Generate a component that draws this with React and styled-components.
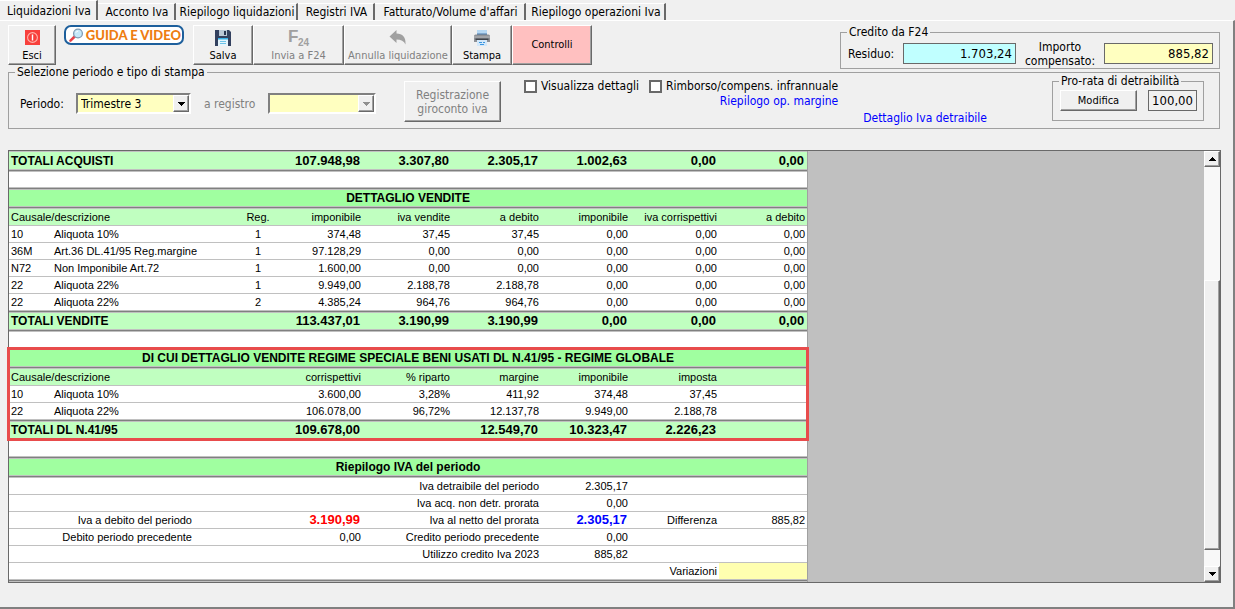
import React from "react";
import styled, { createGlobalStyle, css } from "styled-components";

const UI_FONT = `"DejaVu Sans Condensed", "DejaVu Sans", sans-serif`;
const GRID_FONT = `"Liberation Sans", Arial, sans-serif`;

const GlobalStyle = createGlobalStyle`
  * { box-sizing: border-box; }
  body { margin: 0; background: #f0f0f0; color: #000; font: 12px/14px ${UI_FONT}; }
  button, input, select { font: inherit; color: inherit; margin: 0; border-radius: 0; }
`;

const Window = styled.div`
  min-height: 100vh;
  display: flex;
  flex-direction: column;
`;

const TabBar = styled.nav`
  display: flex;
  align-items: flex-end;
  height: 20px;
`;

const Tab = styled.button`
  height: ${(p) => (p.$active ? 20 : 17)}px;
  width: ${(p) => p.$w}px;
  flex: none;
  padding: 0 0 0 2px;
  border: 0;
  border-top: 1px solid #fff;
  border-right: 2px solid #696969;
  background: #f0f0f0;
  white-space: nowrap;
`;

const Panel = styled.main`
  flex: 1;
  border-top: 1px solid #fff;
  border-right: 2px solid #808080;
  border-bottom: 2px solid #808080;
  padding: 4px 12px 24px 8px;
`;

const TopRow = styled.div`
  display: flex;
  align-items: flex-start;
  height: 40px;
`;

const raised = css`
  border: 1px solid;
  border-color: #fff #696969 #696969 #fff;
  box-shadow: inset -1px -1px #a0a0a0;
`;

const ToolButton = styled.button`
  ${raised}
  width: ${(p) => p.$w}px;
  height: 40px;
  flex: none;
  display: flex;
  flex-direction: column;
  align-items: center;
  justify-content: ${(p) => (p.$fill ? "center" : "flex-end")};
  gap: ${(p) => p.$gap ?? 3}px;
  padding: 0 0 1px;
  font-size: 11px;
  white-space: nowrap;
  background: ${(p) => p.$fill || "#f0f0f0"};
  &:disabled { color: #808080; }
`;

const GuideButton = styled.button`
  width: 120px;
  height: 20px;
  flex: none;
  margin: 0 9px 0 8px;
  padding: 0 1px 0 3px;
  display: flex;
  align-items: center;
  justify-content: space-between;
  border: 2px solid #1d5f9c;
  border-radius: 7px;
  background: #fff;
  color: #ee7d11;
  font: 900 13px/14px Lato, sans-serif;
  white-space: nowrap;
`;

const Group = styled.fieldset`
  margin: 0;
  min-width: 0;
  border: 1px solid #a0a0a0;
  padding: 0;
  display: flex;
  legend { padding: 0 2px; margin-left: -1px; line-height: 14px; }
`;

const CreditGroup = styled(Group)`
  width: 380px;
  height: 44px;
  margin-left: auto;
  margin-right: 1px;
  padding: 0 6px 0 7px;
  gap: 7px;
  align-items: center;
  justify-content: flex-end;
`;

const ResidueLabel = styled.label`
  margin-right: auto;
`;

const TwoLineLabel = styled.label`
  text-align: center;
  width: 74px;
`;

const Amount = styled.input`
  width: ${(p) => p.$w}px;
  height: 21px;
  border: 1px solid #696969;
  background: ${(p) => p.$bg || "#f0f0f0"};
  padding: 0 3px;
  font-size: 13px;
  text-align: right;
`;

const FilterGroup = styled(Group)`
  height: 64px;
  margin: 0 1px 0 0;
  padding: 0 15px 0 11px;
  align-items: flex-start;
  > legend { margin-left: -5px; }
`;

const FieldLabel = styled.label`
  width: ${(p) => p.$w}px;
  margin-top: 18px;
  flex: none;
  ${(p) => p.$muted && "padding-left: 13px; color: #808080;"}
`;

const SelectBox = styled.span`
  position: relative;
  flex: none;
  width: ${(p) => p.$w}px;
  height: 21px;
  margin-top: 14px;
  select {
    appearance: none;
    width: 100%;
    height: 100%;
    padding: 1px 20px 0 3px;
    border: 2px solid;
    border-color: #808080 #fff #fff #808080;
    background: #ffffc0;
    opacity: 1;
  }
`;

const DropArrow = styled.span`
  ${raised}
  position: absolute;
  right: 2px;
  top: 2px;
  width: 16px;
  height: 17px;
  display: grid;
  place-items: center;
  background: #f0f0f0;
  pointer-events: none;
`;

const GiroButton = styled.button`
  ${raised}
  width: 97px;
  height: 41px;
  flex: none;
  margin: 2px 23px 0 28px;
  padding: 0;
  background: #f0f0f0;
  &:disabled { color: #808080; }
`;

const Options = styled.div`
  display: flex;
  flex-direction: column;
  align-items: flex-end;
  gap: 1px;
`;

const CheckRow = styled.div`
  display: flex;
  gap: 10px;
`;

const Check = styled.label`
  display: flex;
  align-items: center;
  gap: 4px;
  white-space: nowrap;
  input {
    appearance: none;
    width: 13px;
    height: 13px;
    border: 2px solid #696969;
    background: #fff;
  }
`;

const BlueLink = styled.a`
  color: #0000ff;
  text-decoration: none;
  white-space: nowrap;
`;

const DetailLink = styled(BlueLink)`
  margin: 32px 0 0 25px;
`;

const ProRata = styled(Group)`
  width: 152px;
  height: 47px;
  margin: -5px 0 0 auto;
  padding: 2px 6px 0 7px;
  justify-content: space-between;
  align-items: flex-start;
`;

const SmallButton = styled.button`
  ${raised}
  width: 77px;
  height: 21px;
  padding: 0;
  font-size: 11px;
  background: #f0f0f0;
`;

const Sheet = styled.section`
  display: flex;
  margin: 21px 0 0;
  border: 1px solid #696969;
  background: #c0c0c0;
`;

const Report = styled.div`
  width: 799px;
  flex: none;
  background: #fff;
  border-right: 1px solid #a0a0a0;
  font-family: ${GRID_FONT};
  font-size: 11px;
`;

const Section = styled.div`
  position: relative;
  ${(p) =>
    p.$marked &&
    css`
      &::after {
        content: "";
        position: absolute;
        inset: -3px -2px 0 -2px;
        border: 3px solid #e84c4c;
        pointer-events: none;
      }
    `}
`;

const Table = styled.table`
  width: 100%;
  table-layout: fixed;
  border-collapse: separate;
  border-spacing: 0;
`;

const RULE = "inset 0 -1px #c0c0c0, inset 0 -2px #808080, inset 0 -3px #c0c0c0";
const FILL = { title: "#a0ffa0", head: "#c0ffc0", total: "#c0ffc0" };
const isBold = (kind) => kind === "title" || kind === "total";

const Row = styled.tr`
  height: ${(p) => (p.$first ? 21 : p.$rule ? 19 : 17)}px;
  td, th {
    padding: ${(p) => (p.$first ? 2 : 0)}px 2px ${(p) => (p.$rule ? 3 : 1)}px;
    line-height: 14px;
    font-weight: ${(p) => (isBold(p.$kind) ? "bold" : "normal")};
    font-size: ${(p) => (isBold(p.$kind) ? 12 : 11)}px;
    background: ${(p) => FILL[p.$kind] || "#fff"};
    box-shadow: ${(p) => (p.$rule ? RULE : "inset 0 -1px #c0c0c0")}${(p) => (p.$first ? ", inset 0 1px #c0c0c0" : "")};
    white-space: nowrap;
    text-align: left;
  }
`;

const Num = styled.td`
  && {
    text-align: right;
    font-size: ${(p) => (p.$strong ? 13 : 11)}px;
    font-weight: ${(p) => (p.$strong ? "bold" : "normal")};
    color: ${(p) => p.$color || "inherit"};
    padding-right: ${(p) => (p.$strong ? 3 : 2)}px;
    background: ${(p) => p.$bg};
  }
`;

const HeadNum = styled.th`
  && { text-align: right; }
`;

const Mid = styled.td`
  && { text-align: center; }
`;

const TitleCell = styled.th`
  && { text-align: center; }
`;

const Spacer = styled.div`
  height: 18px;
  background: #fff;
  box-shadow: ${RULE};
`;

const Void = styled.div`
  flex: 1;
`;

const ScrollBar = styled.div`
  width: 16px;
  flex: none;
  display: flex;
  flex-direction: column;
  background: #f8f8f8;
`;

const ScrollButton = styled.button`
  ${raised}
  height: 16px;
  padding: 0;
  display: grid;
  place-items: center;
  background: #f0f0f0;
`;

const Track = styled.div`
  flex: ${(p) => p.$share};
`;

const Thumb = styled.div`
  ${raised}
  flex: 270;
  background: #f0f0f0;
`;

const Triangle = ({ up, muted }) => (
  <svg width="7" height="4" viewBox="0 0 7 4" shapeRendering="crispEdges">
    <path d={up ? "M3 0h1v1h1v1h1v1h1v1H0V3h1V2h1V1h1z" : "M0 0h7v1H6v1H5v1H4v1H3V3H2V2H1V1H0z"} fill={muted ? "#909090" : "#000"} />
  </svg>
);

const ExitIcon = () => (
  <svg width="15" height="16" viewBox="0 0 15 16">
    <rect width="15" height="15" fill="#f8403c" />
    <circle cx="7.5" cy="7.5" r="4.9" fill="none" stroke="#ffb4ac" strokeWidth="1.1" />
    <path d="M7.5 4.5v6" stroke="#fff" strokeWidth="1.4" />
  </svg>
);

const GlassIcon = () => (
  <svg width="15" height="14" viewBox="0 0 15 14">
    <path d="M6 8.2 1.5 12.6" stroke="#e8424a" strokeWidth="2.6" strokeLinecap="round" />
    <circle cx="9" cy="5.5" r="4.4" fill="#c4e8fa" stroke="#7e9cb4" strokeWidth="1.3" />
    <path d="M6.8 4.8a2.6 2.6 0 0 1 2.4-1.7" stroke="#fff" fill="none" />
  </svg>
);

const SaveIcon = () => (
  <svg width="16" height="16" viewBox="0 0 16 16">
    <path d="M0 0h14l2 2v14H0z" fill="#33415f" />
    <path d="M4 0h8v6H4z" fill="#b9c7d6" />
    <path d="M9 1h2v4H9z" fill="#26344f" />
    <path d="M3 8h10v8H3z" fill="#e6f5fc" />
    <path d="M3 8h10v1.5H3z" fill="#35aee6" />
    <path d="M5 11.5h6M5 13.5h6" stroke="#6cc3e8" />
  </svg>
);

const F24Icon = () => (
  <svg width="22" height="21" viewBox="0 0 22 21" fill="#a0a0a0" fontFamily="Liberation Sans, sans-serif" fontWeight="bold">
    <text x="0" y="15" fontSize="17">F</text>
    <text x="10" y="19" fontSize="10">24</text>
  </svg>
);

const UndoIcon = () => (
  <svg width="18" height="16" viewBox="0 0 18 16">
    <path d="M7.500 0v3.500c6 0 9.500 3.500 9 11-1.500-3.500-4.500-5-9-5V13L.5 6.500z" fill="#a0a0a0" />
  </svg>
);

const PrintIcon = () => (
  <svg width="16" height="16" viewBox="0 0 16 16">
    <path d="M3 0h10v5H3z" fill="#b5d7f3" />
    <path d="M3 3.500h10v1.500H3z" fill="#4b79a8" />
    <path d="M0 6q0-1.500 1.500-1.500h13Q16 4.500 16 6v6H0z" fill="#8d9197" />
    <path d="M0 6.500h16v1H0z" fill="#b4b6ba" />
    <path d="M1.500 8.500h13V10h-13z" fill="#3f444c" />
    <path d="M3 10h10v6H3z" fill="#d3e8fa" />
    <path d="M5 12.500h3M9 12.500h2M6 14.500h4" stroke="#3b97e0" />
  </svg>
);

const TABS = [
  ["Liquidazioni Iva", 98],
  ["Acconto Iva", 78],
  ["Riepilogo liquidazioni", 122],
  ["Registri IVA", 77],
  ["Fatturato/Volume d'affari", 151],
  ["Riepilogo operazioni Iva", 140],
];

const SALES = [
  ["10", "Aliquota 10%", "1", "374,48", "37,45", "37,45", "0,00", "0,00", "0,00"],
  ["36M", "Art.36 DL.41/95 Reg.margine", "1", "97.128,29", "0,00", "0,00", "0,00", "0,00", "0,00"],
  ["N72", "Non Imponibile Art.72", "1", "1.600,00", "0,00", "0,00", "0,00", "0,00", "0,00"],
  ["22", "Aliquota 22%", "1", "9.949,00", "2.188,78", "2.188,78", "0,00", "0,00", "0,00"],
  ["22", "Aliquota 22%", "2", "4.385,24", "964,76", "964,76", "0,00", "0,00", "0,00"],
];

const MARGIN = [
  ["10", "Aliquota 10%", "", "3.600,00", "3,28%", "411,92", "374,48", "37,45", ""],
  ["22", "Aliquota 22%", "", "106.078,00", "96,72%", "12.137,78", "9.949,00", "2.188,78", ""],
];

const SUMMARY = [
  ["", "", "Iva detraibile del periodo", "2.305,17", "", ""],
  ["", "", "Iva acq. non detr. prorata", "0,00", "", ""],
  ["Iva a debito del periodo", "3.190,99", "Iva al netto del prorata", "2.305,17", "Differenza", "885,82"],
  ["Debito periodo precedente", "0,00", "Credito periodo precedente", "0,00", "", ""],
  ["", "", "Utilizzo credito Iva 2023", "885,82", "", ""],
  ["", "", "", "", "Variazioni", ""],
];

const COLUMNS = [43, 142, 46, 36, 87, 89, 89, 89, 89, 88];

const Columns = () => (
  <colgroup>
    {COLUMNS.map((w, i) => (
      <col key={i} width={w} />
    ))}
  </colgroup>
);

const TotalRow = ({ label, values, first }) => (
  <Row $kind="total" $rule $first={first}>
    <th scope="row" colSpan={4}>{label}</th>
    {values.map((v, i) => (
      <Num key={i} $strong>{v}</Num>
    ))}
  </Row>
);

const DetailTable = ({ title, reg, heads, rows, totalLabel, totals }) => (
  <Table>
    <Columns />
    <thead>
      <Row $kind="title" $rule>
        <TitleCell colSpan={10}>{title}</TitleCell>
      </Row>
      <Row $kind="head">
        <th scope="col" colSpan={3}>Causale/descrizione</th>
        <TitleCell scope="col">{reg}</TitleCell>
        {heads.map((h, i) => (
          <HeadNum key={i} scope="col">{h}</HeadNum>
        ))}
      </Row>
    </thead>
    <tbody>
      {rows.map(([code, text, register, ...nums], i) => (
        <Row key={i} $rule={i === rows.length - 1}>
          <td>{code}</td>
          <td colSpan={2}>{text}</td>
          <Mid>{register}</Mid>
          {nums.map((n, j) => (
            <Num key={j}>{n}</Num>
          ))}
        </Row>
      ))}
      <TotalRow label={totalLabel} values={totals} />
    </tbody>
  </Table>
);

export default function App() {
  return (
    <>
      <GlobalStyle />
      <Window>
        <TabBar>
          {TABS.map(([name, w], i) => (
            <Tab key={name} $w={w} $active={i === 0}>{name}</Tab>
          ))}
        </TabBar>
        <Panel>
          <TopRow>
            <ToolButton $w={48}><ExitIcon />Esci</ToolButton>
            <GuideButton><GlassIcon />GUIDA E VIDEO</GuideButton>
            <ToolButton $w={60}><SaveIcon />Salva</ToolButton>
            <ToolButton $w={91} $gap={1} disabled><F24Icon />Invia a F24</ToolButton>
            <ToolButton $w={108} disabled><UndoIcon />Annulla liquidazione</ToolButton>
            <ToolButton $w={60}><PrintIcon />Stampa</ToolButton>
            <ToolButton $w={80} $fill="#ffc0c0">Controlli</ToolButton>
            <CreditGroup>
              <legend>Credito da F24</legend>
              <ResidueLabel htmlFor="residuo">Residuo:</ResidueLabel>
              <Amount id="residuo" $w={113} $bg="#c0ffff" defaultValue="1.703,24" />
              <TwoLineLabel htmlFor="importo">Importo compensato:</TwoLineLabel>
              <Amount id="importo" $w={109} $bg="#ffffc0" defaultValue="885,82" />
            </CreditGroup>
          </TopRow>

          <FilterGroup>
            <legend>Selezione periodo e tipo di stampa</legend>
            <FieldLabel htmlFor="periodo" $w={56}>Periodo:</FieldLabel>
            <SelectBox $w={115}>
              <select id="periodo"><option>Trimestre 3</option></select>
              <DropArrow><Triangle /></DropArrow>
            </SelectBox>
            <FieldLabel htmlFor="registro" $w={77} $muted>a registro</FieldLabel>
            <SelectBox $w={108}>
              <select id="registro" disabled><option></option></select>
              <DropArrow><Triangle muted /></DropArrow>
            </SelectBox>
            <GiroButton disabled>Registrazione<br />giroconto iva</GiroButton>
            <Options>
              <CheckRow>
                <Check><input type="checkbox" />Visualizza dettagli</Check>
                <Check><input type="checkbox" />Rimborso/compens. infrannuale</Check>
              </CheckRow>
              <BlueLink href="#margine">Riepilogo op. margine</BlueLink>
            </Options>
            <DetailLink href="#detraibile">Dettaglio Iva detraibile</DetailLink>
            <ProRata>
              <legend>Pro-rata di detraibilità</legend>
              <SmallButton>Modifica</SmallButton>
              <Amount $w={49} defaultValue="100,00" aria-label="Pro-rata di detraibilità" />
            </ProRata>
          </FilterGroup>

          <Sheet>
            <Report>
              <Section>
                <Table>
                  <Columns />
                  <tbody>
                    <TotalRow first label="TOTALI ACQUISTI" values={["107.948,98", "3.307,80", "2.305,17", "1.002,63", "0,00", "0,00"]} />
                  </tbody>
                </Table>
              </Section>
              <Spacer />
              <Section>
                <DetailTable
                  title="DETTAGLIO VENDITE"
                  reg="Reg."
                  heads={["imponibile", "iva vendite", "a debito", "imponibile", "iva corrispettivi", "a debito"]}
                  rows={SALES}
                  totalLabel="TOTALI VENDITE"
                  totals={["113.437,01", "3.190,99", "3.190,99", "0,00", "0,00", "0,00"]}
                />
              </Section>
              <Spacer />
              <Section $marked>
                <DetailTable
                  title="DI CUI DETTAGLIO VENDITE REGIME SPECIALE BENI USATI DL N.41/95 - REGIME GLOBALE"
                  heads={["corrispettivi", "% riparto", "margine", "imponibile", "imposta", ""]}
                  rows={MARGIN}
                  totalLabel="TOTALI DL N.41/95"
                  totals={["109.678,00", "", "12.549,70", "10.323,47", "2.226,23", ""]}
                />
              </Section>
              <Spacer />
              <Section>
                <Table>
                  <Columns />
                  <thead>
                    <Row $kind="title" $rule>
                      <TitleCell colSpan={10}>Riepilogo IVA del periodo</TitleCell>
                    </Row>
                  </thead>
                  <tbody>
                    {SUMMARY.map(([a, b, c, d, e, f], i) => (
                      <Row key={i} $rule={i === SUMMARY.length - 1}>
                        <Num colSpan={2}>{a}</Num>
                        <Num colSpan={3} $strong={i === 2} $color={i === 2 ? "#ff0000" : undefined}>{b}</Num>
                        <Num colSpan={2}>{c}</Num>
                        <Num $strong={i === 2} $color={i === 2 ? "#0000ff" : undefined}>{d}</Num>
                        <Num>{e}</Num>
                        <Num $bg={e === "Variazioni" ? "#ffffb0" : undefined}>{f}</Num>
                      </Row>
                    ))}
                  </tbody>
                </Table>
              </Section>
            </Report>
            <Void />
            <ScrollBar>
              <ScrollButton aria-label="Scorri su"><Triangle up /></ScrollButton>
              <Track $share={114} />
              <Thumb />
              <Track $share={16} />
              <ScrollButton aria-label="Scorri giù"><Triangle /></ScrollButton>
            </ScrollBar>
          </Sheet>
        </Panel>
      </Window>
    </>
  );
}
